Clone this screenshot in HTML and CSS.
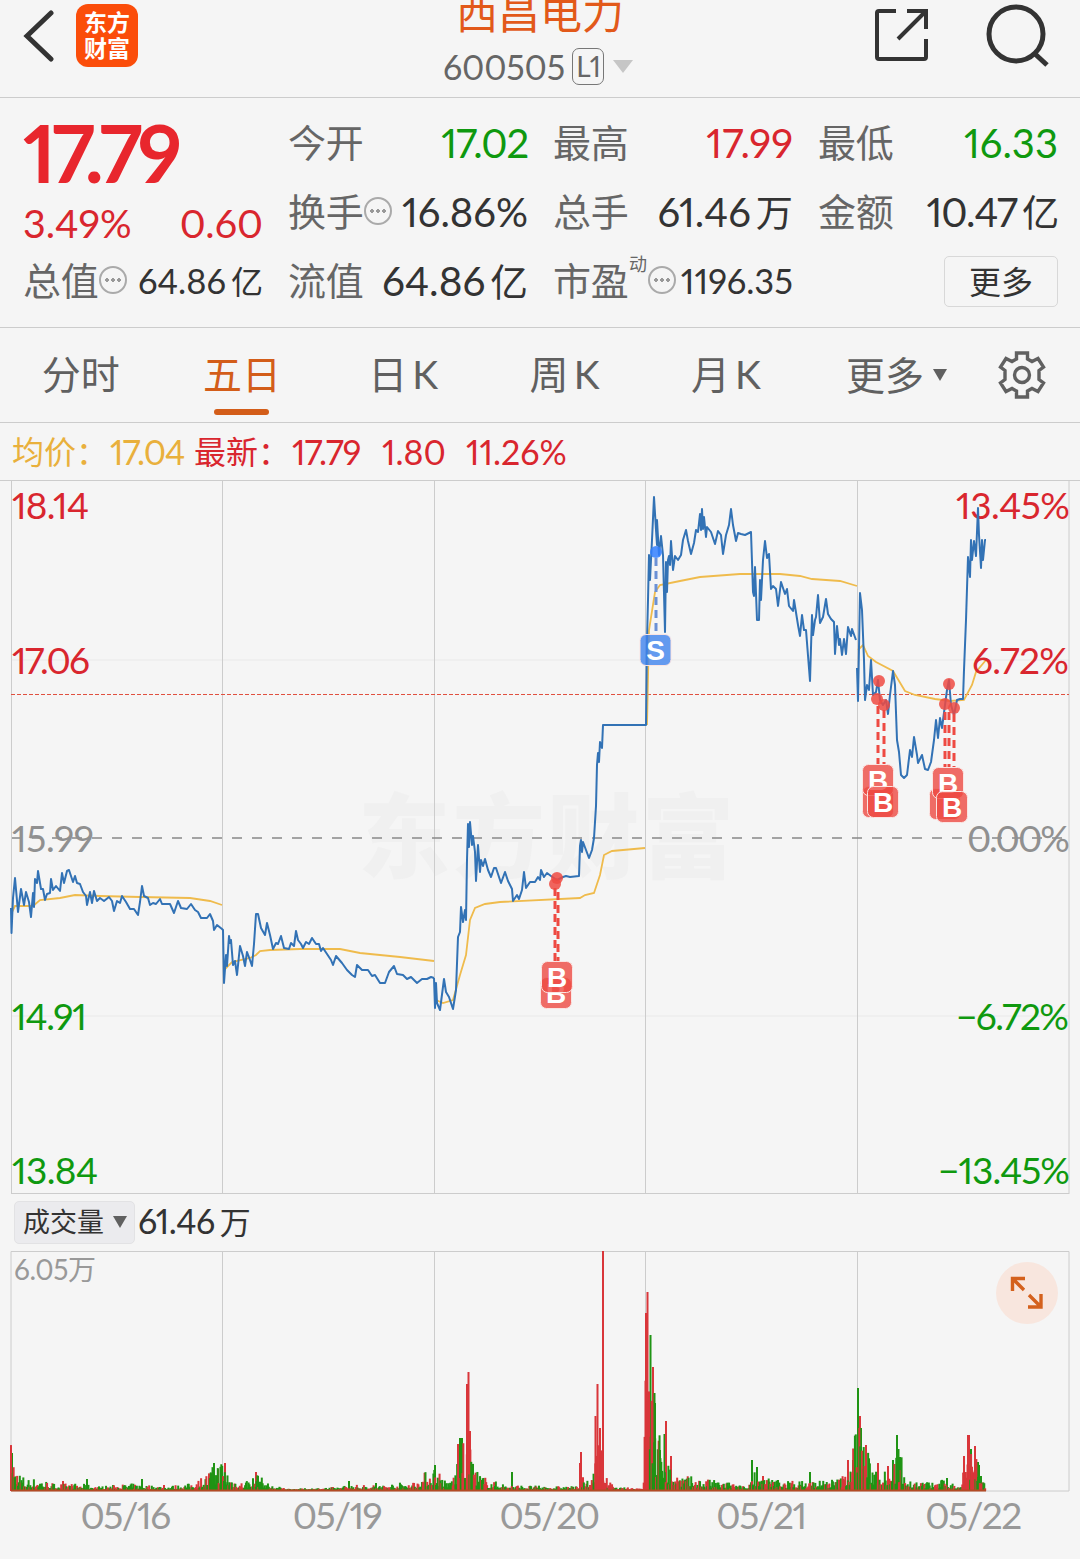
FILE: index.html
```html
<!DOCTYPE html>
<html lang="zh-CN">

<head>
    <meta charset="UTF-8">
    <meta name="viewport" content="width=device-width, initial-scale=1.0">
    <title>西昌电力 600505</title>
    <link rel="stylesheet" href="styles.css">
</head>

<body>
    <header class="topbar">
        <div class="topbar-left">
            <svg class="icon-back" width="32" height="52" viewBox="0 0 32 52"><path d="M28 3 4 26 28 49"/></svg>
            <div class="logo"><span>东方</span><span>财富</span></div>
        </div>
        <div class="stock">
            <h1>西昌电力</h1>
            <div class="stock-code">600505<span class="level">L1</span><i class="caret"></i></div>
        </div>
        <div class="topbar-right">
            <svg class="icon-share" width="56" height="56" viewBox="0 0 56 56"><path d="M22 4H5Q3 4 3 6V50Q3 52 5 52H50Q52 52 52 50V32M33 4H52V22M51 5 24 32"/></svg>
            <svg class="icon-search" width="66" height="66" viewBox="0 0 66 66"><circle cx="30" cy="30" r="27"/><path d="M48 49 61 61"/></svg>
        </div>
    </header>

    <section class="quote">
        <div class="price-box">
            <div class="price">17.79</div>
            <div class="change"><span>3.49%</span><span>0.60</span></div>
        </div>
        <div class="cell"><label>今开</label><b class="green k17">17.02</b></div>
        <div class="cell"><label>最高</label><b class="red">17.99</b></div>
        <div class="cell"><label>最低</label><b class="green">16.33</b></div>
        <div class="cell"><label>换手</label><i class="more-dot"></i><b>16.86%</b></div>
        <div class="cell"><label>总手</label><b>61.46<em>万</em></b></div>
        <div class="cell"><label>金额</label><b class="k17">10.47<em>亿</em></b></div>
        <div class="cell"><label>总值</label><i class="more-dot"></i><b class="small">64.86<em>亿</em></b></div>
        <div class="cell"><label>流值</label><b class="wide">64.86<em>亿</em></b></div>
        <div class="cell"><label>市盈<sup>动</sup></label><i class="more-dot"></i><b class="small">1196.35</b></div>
        <div class="cell cell-more"><button>更多</button></div>
    </section>

    <nav class="tabs">
        <a>分时</a>
        <a class="active">五日</a>
        <a>日<span>K</span></a>
        <a>周<span>K</span></a>
        <a>月<span>K</span></a>
        <a class="tab-more">更多<i class="caret-dark"></i></a>
        <svg class="icon-gear" width="50" height="50" viewBox="-25 -25 50 50"><path d="M-5.500-22H5.500V-16L10-13.500 16-16.500 21.500-8 17-4.500V4.500L21.500 8 16 16.500 10 13.500 5.500 16V22H-5.500V16L-10 13.500-16 16.500-21.500 8-17 4.500V-4.500L-21.500-8-16-16.500-10-13.500-5.500-16Z"/><circle r="7.500"/></svg>
    </nav>

    <div class="legend">
        <span class="avg">均价：</span><span class="avg n1">17.04</span>
        <span class="red l2">最新：</span><span class="red n2">17.79</span>
        <span class="red n3">1.80</span><span class="red n4">11.26%</span>
    </div>

    <svg class="chart" id="priceChart" width="1080" height="714" viewBox="0 480 1080 714">
        <text class="watermark" x="358" y="871" textLength="376">东方财富</text>
        <path class="grid-faint" d="M11 660H1069M11 1016H1069"/>
        <path class="grid" d="M0 480.5H1080M11 1193.5H1069M11.5 481V1194M222.5 481V1194M434.5 481V1194M645.5 481V1194M857.5 481V1194M1069 481V1194"/>
        <path class="zero-line" d="M12 838H1069"/>
        <path class="cost-line" d="M11 694.5H1069"/>
        <g id="avgLines"></g>
        <g class="axis">
            <text class="up" x="12" y="519" textLength="77">18.14</text>
            <text class="up" x="12" y="674" textLength="78">17.06</text>
            <text class="mid" x="12" y="852" textLength="82">15.99</text>
            <text class="down" x="12" y="1030" textLength="75">14.91</text>
            <text class="down" x="12" y="1184" textLength="86">13.84</text>
            <text class="up" x="956" y="519" textLength="114">13.45%</text>
            <text class="up" x="972" y="674" textLength="97">6.72%</text>
            <text class="mid" x="967" y="852" textLength="103">0.00%</text>
            <text class="down" x="956" y="1030" textLength="113">−6.72%</text>
            <text class="down" x="938" y="1184" textLength="132">−13.45%</text>
        </g>
        <g id="priceLines"></g>
        <g id="marks"></g>
    </svg>

    <div class="volume-head">
        <button>成交量<i class="caret-dark"></i></button>
        <span>61.46<em>万</em></span>
    </div>

    <div class="volume">
        <svg class="chart" id="volumeChart" width="1080" height="242" viewBox="0 1250 1080 242">
            <path class="grid" d="M11 1251.5H1069V1491H11ZM222.5 1251V1491M434.5 1251V1491M645.5 1251V1491M857.5 1251V1491"/>
            <text class="vol-max" x="14" y="1280" textLength="82">6.05万</text>
            <g id="bars"></g>
        </svg>
        <button class="expand">
            <svg width="34" height="34" viewBox="0 0 34 34"><path d="M2.500 15V2.500H15M3 3 14 14M31 18V31H18M30 30 19 19"/></svg>
        </button>
    </div>

    <div class="dates"><span>05/16</span><span>05/19</span><span>05/20</span><span>05/21</span><span>05/22</span></div>

    <script src="chart.js"></script>
</body>

</html>
```

FILE: styles.css
```css
body {
    margin: 0;
    width: 1080px;
    height: 1559px;
    overflow: hidden;
    background-color: #f5f5f5;
    color: #333;
    font-family: Lato, "Noto Sans CJK SC", sans-serif;
    font-feature-settings: "pnum";
}

svg {
    display: block;
    fill: none;
}

em,
i {
    font-style: normal;
}

button {
    font-family: inherit;
    color: inherit;
    padding: 0;
    box-sizing: border-box;
}

.red {
    color: #d9262e;
}

.green {
    color: #0f990f;
}

/* header */
.topbar {
    display: flex;
    justify-content: space-between;
    height: 97px;
    border-bottom: 1px solid #ccc;
}

.topbar-left,
.topbar-right {
    display: flex;
    width: 300px;
}

.icon-back {
    margin: 10px 0 0 23px;
    stroke: #333;
    stroke-width: 5;
    stroke-linecap: round;
}

.logo {
    display: flex;
    flex-direction: column;
    justify-content: center;
    align-items: center;
    width: 62px;
    height: 63px;
    margin: 4px 0 0 21px;
    border-radius: 12px;
    background-color: #fb4d0a;
    color: white;
    font-size: 23px;
    line-height: 26px;
    font-weight: bold;
}

.logo span {
    margin-top: -1px;
    margin-bottom: 1px;
}

.stock {
    display: flex;
    flex-direction: column;
    align-items: center;
}

h1 {
    margin: -8px 0 0;
    font-size: 42px;
    line-height: 42px;
    font-weight: normal;
    color: #e2591a;
}

.stock-code {
    display: flex;
    align-items: center;
    height: 40px;
    margin-top: 12px;
    margin-left: -4px;
    font-size: 34px;
    letter-spacing: -0.2px;
    color: #666;
}

.level {
    width: 30px;
    height: 35px;
    margin-left: 7px;
    border: 1.5px solid #777;
    border-radius: 7px;
    font-size: 28px;
    line-height: 35px;
    letter-spacing: -1px;
    text-align: center;
}

.caret,
.caret-dark {
    border-left: 10px solid transparent;
    border-right: 10px solid transparent;
    border-top: 13px solid #c6c6c6;
    margin-left: 9px;
}

.topbar-right {
    justify-content: flex-end;
}

.icon-share,
.icon-search {
    stroke: #333;
    stroke-width: 4;
}

.icon-share {
    margin: 7px 56px 0 0;
}

.icon-search {
    margin: 4px 28px 0 0;
    stroke-width: 5;
}

/* quote */
.quote {
    display: grid;
    grid-template-columns: repeat(4, 240px);
    grid-template-rows: repeat(3, 69px);
    column-gap: 25px;
    padding: 11px 0 11px 23px;
    border-bottom: 1px solid #ccc;
}

.price-box {
    grid-row: span 2;
}

.price {
    height: 86px;
    font-size: 80px;
    line-height: 86px;
    font-weight: bold;
    letter-spacing: -4.3px;
    color: #e8262d;
}

.change {
    display: flex;
    justify-content: space-between;
    font-size: 39.5px;
    line-height: 56px;
    color: #d9262e;
}

.cell {
    display: flex;
    align-items: center;
    height: 69px;
}

.cell label {
    position: relative;
    font-size: 38px;
    line-height: 56px;
    margin-top: -4px;
    letter-spacing: -0.3px;
    color: #666;
}

.cell b {
    margin-left: auto;
    margin-top: -1px;
    font-size: 40px;
    line-height: 60px;
    font-weight: normal;
    white-space: nowrap;
}

.cell .k17 {
    letter-spacing: -1.1px;
}

.cell .wide {
    font-size: 40.5px;
}

.cell em,
.volume-head em {
    margin-left: 5px;
    font-size: 0.93em;
}

.cell .small {
    font-size: 34.5px;
}

.cell sup {
    position: absolute;
    left: 76px;
    top: -3px;
    font-size: 18px;
    line-height: 30px;
}

.more-dot {
    width: 24px;
    height: 24px;
    margin-left: 1px;
    margin-top: -4px;
    border: 2px solid #aaa;
    border-radius: 50%;
    background: radial-gradient(circle, #999 1.6px, transparent 2px) center / 6px 24px no-repeat, radial-gradient(circle, #999 1.6px, transparent 2px) 3px center / 6px 24px no-repeat, radial-gradient(circle, #999 1.6px, transparent 2px) 15px center / 6px 24px no-repeat;
}

.cell label:has(sup) + .more-dot {
    margin-left: 20px;
}

.cell-more {
    justify-content: flex-end;
}

.cell-more button {
    width: 114px;
    height: 51px;
    border: 1.5px solid #d8d8d8;
    border-radius: 5px;
    background: none;
    font-size: 32px;
    line-height: 44px;
}

/* tabs */
.tabs {
    display: flex;
    height: 94px;
    border-bottom: 1px solid #ccc;
}

.tabs a {
    position: relative;
    width: 161.3px;
    text-align: center;
    font-size: 39px;
    line-height: 92px;
    color: #606060;
}

.tabs a span {
    margin-left: 5px;
}

.tabs .active {
    color: #d35d19;
}

.tabs .active::after {
    content: "";
    position: absolute;
    left: 53px;
    bottom: 7px;
    width: 55px;
    height: 6px;
    border-radius: 3px;
    background-color: #d35d19;
}

.tabs .tab-more {
    display: flex;
    align-items: center;
    justify-content: center;
    width: 180px;
}

.caret-dark {
    border-left-width: 7px;
    border-right-width: 7px;
    border-top: 12px solid #606060;
}

.icon-gear {
    margin: 22px 0 0 11px;
    stroke: #606060;
    stroke-width: 3.4;
}

/* average / latest */
.legend {
    display: flex;
    height: 57px;
    padding-left: 12px;
    font-size: 34px;
    line-height: 58px;
    white-space: nowrap;
}

.avg {
    color: #e9b03c;
}

.legend .avg:first-child,
.l2 {
    width: 98px;
    font-size: 32px;
}

.n1,
.n2 {
    letter-spacing: -1px;
}

.n1 {
    width: 84px;
}

.n2 {
    width: 90px;
}

.n3 {
    width: 84px;
}

/* charts */
.grid {
    stroke: #ccc;
}

.grid-faint {
    stroke: #e9e9e9;
}

.zero-line {
    stroke: #888;
    stroke-width: 1.6;
    stroke-dasharray: 10 10;
}

.cost-line {
    stroke: #e0503f;
    stroke-dasharray: 4 2;
}

.watermark {
    font-size: 92px;
    font-weight: 900;
    fill: #f0f0f0;
}

.axis text {
    font-size: 37px;
}

.up {
    fill: #d9262e;
}

.mid {
    fill: #909090;
}

.down {
    fill: #0f990f;
}

.avg-line {
    stroke: #efbb4c;
    stroke-width: 1.8;
}

.price-line {
    stroke: #3272b5;
    stroke-width: 2;
    stroke-linejoin: round;
}

.mark-line {
    stroke-width: 3;
    stroke-dasharray: 8 5;
}

.mark-text {
    font-family: "Liberation Sans", sans-serif;
    font-size: 28px;
    font-weight: bold;
    fill: white;
    text-anchor: middle;
}

.volume-head {
    display: flex;
    align-items: center;
    height: 56px;
    padding-left: 14px;
    font-size: 34px;
    line-height: 50px;
    letter-spacing: -0.5px;
}

.volume-head span {
    margin-top: -2px;
}

.volume-head em {
    font-size: 31px;
}

.volume-head button {
    display: flex;
    align-items: center;
    width: 121px;
    height: 43px;
    padding-left: 8px;
    margin-right: 3px;
    border: 1px solid #e2e2e4;
    border-radius: 5px;
    background-color: #ebebee;
    font-size: 27px;
    line-height: 38px;
}

.vol-max {
    font-size: 28px;
    fill: #999;
}

.volume {
    position: relative;
}

.expand {
    position: absolute;
    left: 996px;
    top: 12px;
    display: flex;
    align-items: center;
    justify-content: center;
    width: 62px;
    height: 62px;
    border: none;
    border-radius: 50%;
    background-color: #f8e6de;
}

.expand path {
    stroke: #d4611d;
    stroke-width: 3.4;
}

.dates {
    display: flex;
    padding-left: 19px;
    color: #999;
    font-size: 37px;
    line-height: 45px;
    letter-spacing: -1.5px;
}

.dates span {
    width: 212px;
    text-align: center;
}
```

FILE: chart.js
```js
const pricePaths = [
    '11,908 11.5,933 13,898 15,878 18,912 21,889 24,905 26,892 29,902 31,917 33,893 34,907 35,879 37,883 38,871 41,889 43,889 45,900 47,894 50,893 51,879 53,890 56,886 60,891 62,873 64,883 67,871 69,870 73,882 75,876 77,883 80,884 83,892 86,896 87,905 90,892 92,903 94,891 97,901 100,898 104,901 109,897 112,901 114,911 117,901 120,903 122,896 126,902 130,909 134,909 138,915 140,902 142,886 144,896 148,898 150,905 153,903 156,904 160,899 162,904 170,904 174,913 178,901 181,908 187,909 191,904 195,910 198,912 201,918 207,918 210,914 213,921 214,930 217,925 222,929 ' +
    '223,930 224,983 226,955 227,966 229,936 230,943 231,940 233,965 235,961 237,975 240,946 243,956 245,966 247,952 250,960 252,966 254,944 256,914 258,914 261,928 265,935 267,923 270,935 273,949 276,943 278,944 281,936 284,948 289,949 291,943 294,946 296,931 298,940 301,944 303,948 306,942 309,944 312,938 316,944 319,944 321,951 323,948 327,954 331,960 333,965 336,956 342,963 347,970 352,975 355,977 357,965 362,970 368,970 372,976 375,975 380,983 385,983 389,972 394,966 397,974 403,975 407,979 411,977 417,983 422,979 427,979 431,977 434,978',
    '434,978 435,1008 436,983 437,1003 440,1010 444,979 446,992 449,997 453,1009 456,990 458,937 460,932 461,907 463,922 465,910 466,920 467,860 468,824 469,847 470,822 472,845 473,836 475,852 476,881 478,845 480,872 481,860 483,866 485,859 488,870 491,877 494,868 496,868 501,883 505,872 508,881 512,889 513,901 517,895 519,899 522,890 524,872 526,888 530,882 535,882 538,877 540,880 541,870 544,877 547,873 551,876 557,880 563,877 566,876 570,877 579,876 580,846 581,840 582,852 583,842 586,850 589,858 592,850 594,838 596,806 597,765 598,753 599,762 600,742 602,748 603,725 645,725 ' +
    '646,725 647,640 648,600 649,555 650,580 652,540 654,497 656,530 657,545 657,520 659,555 661,536 663,555 665,632 666,562 667,592 668,560 669,556 670,565 671,541 673,570 675,556 678,560 681,555 683,540 686,530 688,541 691,554 694,543 696,530 698,532 700,514 701,530 702,509 703,529 704,517 706,537 707,527 711,532 715,544 718,531 721,535 723,554 726,535 729,525 731,509 733,525 736,541 738,533 741,534 745,535 751,532 753,592 754,596 755,567 757,620 759,620 760,580 761,600 763,560 765,541 767,558 769,554 771,589 773,586 776,589 778,606 781,582 785,594 787,589 789,606 793,611 794,600 798,625 800,636 802,615 804,630 806,630 810,681 812,615 813,635 815,620 816,617 818,595 820,623 823,617 826,599 828,614 831,619 834,622 835,654 837,626 839,645 840,639 842,655 844,639 846,654 848,627 851,636 852,629 856,640',
    '857,668 858,701 860,593 862,610 864,660 865,700 867,685 869,690 871,660 873,695 876,692 878,680 880,700 883,705 886,700 888,714 890,695 893,671 895,685 897,740 899,752 901,775 904,778 907,775 910,750 912,757 914,737 917,755 918,763 922,755 925,769 928,770 931,762 934,740 936,720 938,738 940,718 942,728 945,705 947,690 949,680 951,705 954,715 957,700 960,699 963,699 964,670 966,620 968,557 970,577 971,540 972,560 974,541 976,556 978,508 979,535 981,568 982,540 983,560 985,540 986,540'
];

const avgPaths = [
    '12,912 15,906 33,906 40,900 60,898 75,895 100,896 140,897 190,898 210,901 222,905',
    '224,970 232,962 250,958 256,955 260,951 270,950 300,949 340,949 360,953 400,957 434,961',
    '436,1000 443,1003 453,1000 460,975 466,955 470,920 475,908 485,904 500,902 580,898 585,895 594,893 600,875 604,855 612,851 645,848',
    '647,725 649,630 655,592 660,585 680,581 700,577 740,574 780,574 800,576 812,579 840,581 857,586',
    '858,650 863,645 868,656 876,662 893,671 905,691 915,695 935,699 950,701 964,700 972,685 976,672 986,660'
];

function addLines(id, paths, className) {
    document.getElementById(id).innerHTML = paths.map(p => `<polyline class="${className}" points="${p}"/>`).join('');
}

addLines('avgLines', avgPaths, 'avg-line');
addLines('priceLines', pricePaths, 'price-line');

// buy and sell marks: dot on the line, badge below
const red = '#ee4a42';
const blue = '#3f83ee';

function dot(x, y, color) {
    return `<circle cx="${x}" cy="${y}" r="6" fill="${color}" fill-opacity="0.85"/>`;
}

function stem(x, y1, y2, color) {
    return `<path class="mark-line" stroke="${color}" d="M${x} ${y1}V${y2}"/>`;
}

function badge(x, y, letter, color) {
    return `<rect x="${x - 15.5}" y="${y - 15.5}" width="31" height="31" rx="6" fill="${color}" fill-opacity="0.8" stroke="#fbe4e2"/>` +
        `<text class="mark-text" x="${x}" y="${y + 10}">${letter}</text>`;
}

document.getElementById('marks').innerHTML = [
    dot(656, 552, '#3380ff'), stem(656, 558, 634, '#6b91d6'), badge(655.5, 650, 'S', blue),
    dot(557, 878, red), dot(555, 884, red), stem(555, 888, 962, red), stem(558, 892, 962, red),
    badge(556, 993, 'B', red), badge(557, 977, 'B', red),
    dot(879, 681, red), dot(877, 699, red), dot(884, 705, red), stem(878, 706, 765, red), stem(884, 710, 765, red),
    badge(878, 802, '', red), badge(878, 780, 'B', red), badge(883, 802, 'B', red),
    dot(949, 684, red), dot(945, 704, red), dot(954, 708, red), stem(945, 712, 768, red), stem(949, 712, 768, red), stem(954, 714, 768, red),
    badge(945, 804, '', red), badge(948, 783, 'B', red), badge(952, 807, 'B', red)
].join('');

// volume: base level along the x axis, then the single peaks
const level = [
    [11, 38], [15, 20], [25, 9], [40, 9], [55, 5], [80, 5], [100, 3], [130, 5], [165, 3], [190, 5], [205, 12], [222, 25], [230, 12],
    [240, 6], [258, 12], [270, 4], [290, 1], [330, 2], [350, 4], [380, 4], [415, 7], [434, 20], [440, 15], [446, 6], [454, 12], [460, 40],
    [466, 35], [472, 35], [477, 16], [488, 8], [510, 4], [550, 3], [578, 3], [583, 10], [590, 5], [596, 40], [602, 35], [606, 10], [615, 2],
    [643, 2], [646, 110], [652, 85], [656, 50], [664, 35], [670, 18], [680, 12], [700, 9], [730, 6], [748, 2], [752, 18], [765, 9], [800, 7],
    [840, 9], [850, 20], [857, 60], [862, 50], [870, 22], [890, 18], [900, 30], [910, 8], [930, 6], [945, 8], [960, 3], [966, 35], [978, 32],
    [983, 10], [986, 3]
];

const peaks = [
    [12, 38, 'g'], [63, 10, 'r'], [87, 12, 'g'], [142, 12, 'g'], [164, 6, 'r'], [214, 28, 'g'], [218, 22, 'r'], [225, 28, 'r'], [256, 19, 'r'], [258, 15, 'g'],
    [349, 10, 'g'], [376, 8, 'g'], [435, 26, 'g'], [458, 47, 'r'], [460, 53, 'g'], [462, 53, 'g'], [467, 107, 'r'], [468.5, 119, 'r'], [470, 60, 'r'],
    [512, 19, 'g'], [580, 28, 'r'], [581, 39, 'r'], [595.5, 75, 'r'], [597.5, 107, 'r'], [600, 63, 'r'], [603, 240, 'r'],
    [646, 178, 'r'], [647.5, 199, 'r'], [650.5, 156, 'g'], [653, 124, 'r'], [654.5, 98, 'g'], [655, 88, 'g'], [660, 41, 'g'], [664.5, 57, 'g'], [666, 70, 'r'], [671, 35, 'r'],
    [752, 31, 'g'], [757, 24, 'g'], [763, 15, 'r'], [778, 11, 'g'], [810, 19, 'g'], [848, 31, 'r'], [853, 31, 'g'],
    [858, 103, 'g'], [860, 75, 'r'], [861, 63, 'g'], [866, 46, 'r'], [878, 28, 'r'], [888, 25, 'r'], [893, 31, 'g'],
    [897, 56, 'g'], [898.5, 42, 'g'], [900, 34, 'g'], [947, 13, 'g'], [964, 35, 'r'], [968, 56, 'r'], [969, 56, 'r'], [971, 42, 'g'], [975, 45, 'r'], [978, 29, 'g'], [981, 15, 'g']
];

const colors = { r: '#d9363a', g: '#1f9414' };
let seed = 7;

function rand() {
    seed = (seed * 16807) % 2147483647;
    return seed / 2147483647;
}

function levelAt(x) {
    const i = Math.max(1, level.findIndex(p => p[0] >= x));
    const [x0, h0] = level[i - 1];
    const [x1, h1] = level[i];
    return h0 + (h1 - h0) * (x - x0) / (x1 - x0);
}

function bar(x, h, color) {
    return `<rect x="${x - 1}" y="${1491 - h}" width="2" height="${h}" fill="${color}"/>`;
}

let bars = '';
peaks.forEach(([x, h, c]) => bars += bar(x, h, colors[c]));
for (let x = 11; x < 986; x += 0.88) {
    const rising = (x > 590 && x < 648) || (x > 962 && x < 975);
    const falling = x > 649 && x < 665;
    const color = rand() < (rising ? 0.8 : falling ? 0.15 : 0.42) ? colors.r : colors.g;
    const r = rand();
    bars += bar(x, 1 + levelAt(x) * (0.25 + r * r * 1.1), color);
}
bars += `<rect x="11" y="1489.5" width="975" height="2" fill="#b34a24"/>`;
document.getElementById('bars').innerHTML = bars;
```
